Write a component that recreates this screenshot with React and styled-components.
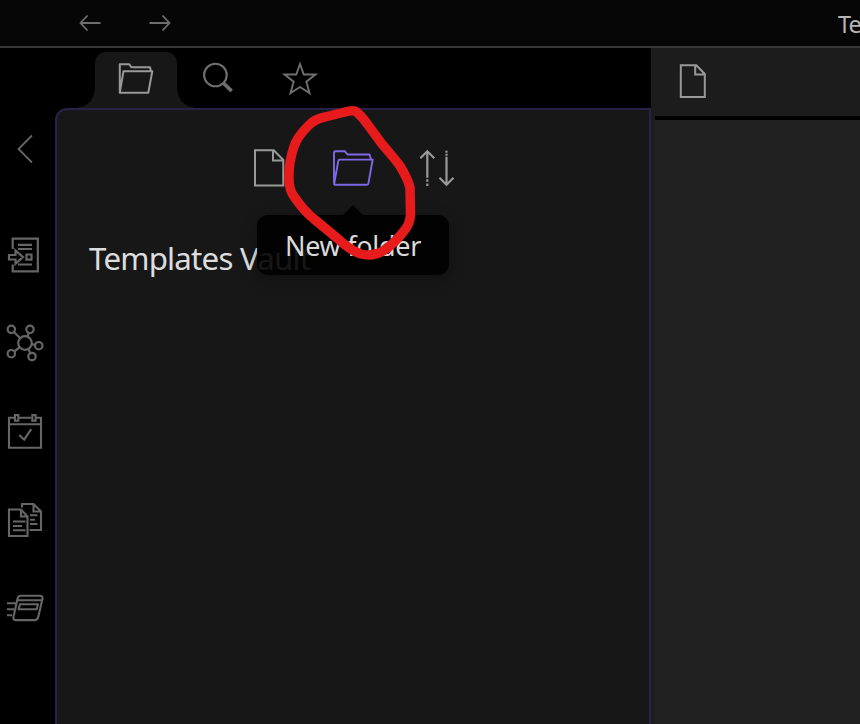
import React from 'react';
import styled, { createGlobalStyle } from 'styled-components';

const GlobalStyle = createGlobalStyle`
  * { box-sizing: border-box; }
  body { margin: 0; background: #000; overflow: hidden; font-family: "Noto Sans", "Open Sans", sans-serif; }
`;

const Window = styled.div`
  position: relative;
  width: 860px;
  height: 724px;
  overflow: hidden;
  display: flex;
  flex-direction: column;
  background: #000;
`;

const TitleBar = styled.header`
  height: 48px;
  flex: none;
  display: flex;
  align-items: center;
  background: #060606;
  border-bottom: 2px solid #363636;
`;

const NavArrows = styled.nav`
  display: flex;
  gap: 46px;
  padding-left: 78px;
  color: #6e6e6e;
`;

const Title = styled.div`
  margin-left: 666px;
  color: #b5b5b5;
  font-size: 23.5px;
  line-height: 32px;
  letter-spacing: -0.9px;
  white-space: nowrap;
  padding-top: 1px;
`;

const Workspace = styled.div`
  flex: 1;
  display: grid;
  grid-template-columns: 55px 596px 1fr;
  min-height: 0;
`;

const Rail = styled.aside`
  display: flex;
  flex-direction: column;
  align-items: center;
  padding: 82px 5px 0 0;
  color: #666;
`;

const RailButton = styled.div`
  height: ${(p) => p.$height || 88}px;
  display: flex;
  align-items: flex-start;
`;

const Sidebar = styled.section`
  display: flex;
  flex-direction: column;
`;

const Tabs = styled.div`
  height: 60px;
  flex: none;
  display: flex;
  padding: 4px 0 0 40px;
`;

const Tab = styled.div`
  position: relative;
  width: 82px;
  height: 56px;
  display: flex;
  justify-content: center;
  padding-top: 8px;
  color: ${(p) => (p.$active ? '#999' : '#707070')};
  background: ${(p) => (p.$active ? '#171717' : 'transparent')};
  border-radius: 10px 10px 0 0;
  &::before, &::after {
    content: ${(p) => (p.$active ? "''" : 'none')};
    position: absolute;
    bottom: 0;
    width: 19px;
    height: 19px;
  }
  &::before { right: 100%; background: radial-gradient(circle at 0 0, transparent 18.5px, #171717 19px); }
  &::after { left: 100%; background: radial-gradient(circle at 100% 0, transparent 18.5px, #171717 19px); }
`;

const Explorer = styled.div`
  flex: 1;
  background: #171717;
  border: 2px solid #28224a;
  border-bottom: 0;
  border-top-left-radius: 12px;
`;

const Actions = styled.div`
  display: flex;
  height: 82px;
  padding: 38px 0 0 195px;
  gap: 44px;
`;

const Action = styled.div`
  position: relative;
  flex: none;
  color: ${(p) => (p.$hot ? '#8069e8' : '#999')};
`;

const Tooltip = styled.div`
  position: absolute;
  z-index: 1;
  top: 67px;
  left: -73px;
  width: 192px;
  height: 60px;
  border-radius: 11px;
  background: rgba(0, 0, 0, 0.9);
  box-shadow: 0 4px 14px rgba(0, 0, 0, 0.3);
  color: #dadada;
  font-size: 27px;
  line-height: 62px;
  letter-spacing: -0.3px;
  text-align: center;
  white-space: nowrap;
  &::before {
    content: '';
    position: absolute;
    bottom: 100%;
    left: 86px;
    border: solid transparent;
    border-width: 0 10px 10px;
    border-bottom-color: rgba(0, 0, 0, 0.9);
  }
`;

const VaultName = styled.div`
  margin: 44px 0 0 32px;
  color: #dcddde;
  font-size: 31.3px;
  line-height: 44px;
  letter-spacing: -0.82px;
  white-space: nowrap;
`;

const Pane = styled.main`
  display: flex;
  flex-direction: column;
  background: #1c1c1c;
`;

const PaneHeader = styled.div`
  height: 68px;
  flex: none;
  padding: 15px 0 0 27px;
  color: #999;
`;

const PaneContent = styled.div`
  flex: 1;
  margin-left: 4px;
  background: #212121;
  border-top: 4px solid #000;
`;

const Annotation = styled.svg`
  position: absolute;
  left: 280px;
  top: 100px;
  z-index: 3;
  pointer-events: none;
`;

const Glyph = styled.svg`
  display: block;
  flex: none;
  fill: none;
  stroke: currentColor;
  stroke-width: ${(p) => p.$stroke || 2};
`;

const Icon = ({ w, h, stroke, children }) => (
  <Glyph width={w} height={h} viewBox={`0 0 ${w} ${h}`} $stroke={stroke}>{children}</Glyph>
);

const BackIcon = () => (
  <Icon w={24} h={18} stroke={1.8}><path d="M22.5 9H2.5M9.5 1.5 2.5 9l7 7.5" /></Icon>
);
const ForwardIcon = () => (
  <Icon w={24} h={18} stroke={1.8}><path d="M1.5 9h20M14.5 1.5l7 7.5-7 7.5" /></Icon>
);
const TabFolderIcon = () => (
  <Icon w={38} h={36} stroke={2}>
    <path strokeLinejoin="round" d="M2.800 32.700V4.200h9.500l2 3H33l1 4M2.800 32.700 6.500 11.200h28.800l-4 21.500Z" />
  </Icon>
);
const SearchIcon = () => (
  <Icon w={38} h={36} stroke={2.1}>
    <circle cx="16.400" cy="15" r="11.300" />
    <path d="m23.800 23.600 1.600-1.500 8 7.600-1.900 2.200-8.200-7.900Z" fill="currentColor" strokeWidth="1" />
  </Icon>
);
const StarIcon = () => (
  <Icon w={38} h={36} stroke={1.9}>
    <path d="M19 4 22.800 14.500H34.500L25.300 21.700 28.500 33 19 27 9.500 33 12.700 21.700 3.500 14.500H15.200Z" />
  </Icon>
);
const NewNoteIcon = () => (
  <Icon w={34} h={40} stroke={2}>
    <path d="M3 2.300h18.800l9.500 9.700v25.500H3ZM21 2.300v10.200h10.300" />
  </Icon>
);
const NewFolderIcon = () => (
  <Icon w={46} h={40} stroke={1.9}>
    <path strokeLinejoin="round" transform="translate(0 -1.700)" d="M4 37V6.500Q4 5 5.500 5h9.500l2.500 3.200H39.500l1.500 4.800M4 38.500 8.300 14.500Q8.500 13.300 10 13.300H42.700L38.400 37Q38.100 38.500 36.800 38.500H4" />
  </Icon>
);
const SortIcon = () => (
  <Icon w={38} h={40} stroke={2.2}>
    <path transform="translate(-1.700 -1.200)" d="M9 4.500V31M2 11.500 9 4.500l7 7M28.200 10v27M21.200 31l7 7 7-7M9 32.500v2.500M9 36.700v2.500M28.200 4v2M28.200 7v2" />
  </Icon>
);
const PageIcon = () => (
  <Icon w={30} h={36} stroke={2}>
    <path d="M2.800 2.300h15.500l8.500 8.700v23h-24ZM17.200 2.300v9.200h9.600" />
  </Icon>
);
const ChevronIcon = () => (
  <Icon w={18} h={36} stroke={1.8}><path d="M16 5.500 2.500 19l13.500 13.500" /></Icon>
);
const InsertIcon = () => (
  <Icon w={36} h={38} stroke={2.2}>
    <path d="M5.700 13V2.700H30.800v32.600H5.700V28.500M11 8.900h14M11 13h14M11 28.500h14M19.500 18.500h5v5.200h-5ZM2 19h6.500v-4.500l7.500 6.600-7.500 6.600V23.500H2Z" />
  </Icon>
);
const GraphIcon = () => (
  <Icon w={38} h={38} stroke={2.2}>
    <circle cx="19" cy="19" r="6.800" />
    <circle cx="5.300" cy="5.300" r="3.700" /><circle cx="24" cy="5.300" r="3.700" />
    <circle cx="32.800" cy="21.700" r="3.700" /><circle cx="26" cy="32.500" r="3.700" />
    <circle cx="5.300" cy="29.700" r="3.700" />
    <path d="m8 8 6.200 6.200M22.800 9l-1.500 3.600M25.700 20.200l3.500.7M22.300 25l2 4M13.600 23.400 8.200 27.500" />
  </Icon>
);
const CalendarIcon = () => (
  <Icon w={36} h={38} stroke={2.1}>
    <path d="M7 5.800H2v30h32v-30h-5M12 5.800h12M2 12.200h32M8 3h3.300v5.700H8ZM25.300 3h3.300v5.700h-3.300ZM12.200 23l5 4.700 7-10.500" />
  </Icon>
);
const TemplatesIcon = () => (
  <Icon w={36} h={38} stroke={2.1}>
    <path transform="translate(0 1)" d="M2 8.500h12l6.500 7V35H2ZM14 8.500v7h6.500M15 6.500V3h11.500l7.500 7.500V29H22.500M26.500 3v7.500H34M6 20.500h12.500M6 25h9M6 29.200h12.500M23 14.200h7.500M23 18.700h5M23 23h7.500" />
  </Icon>
);
const SlidesIcon = () => (
  <Icon w={38} h={34} stroke={2.1}>
    <path strokeLinejoin="round" transform="translate(0 .8)" d="M14.500 4H34q3 0 2.500 3L32.300 25Q31.500 28.300 29 28.300H10Q6.800 28.300 7.500 25L11.500 7Q12.300 4 14.500 4ZM11.500 8.500H36M14 12.500h18l-1.300 5H12.500ZM1 11.500h9M1 17.500h7M1 23.500h5" />
  </Icon>
);

export default function App() {
  return (
    <Window>
      <GlobalStyle />
      <TitleBar>
        <NavArrows><BackIcon /><ForwardIcon /></NavArrows>
        <Title>Templates Vault</Title>
      </TitleBar>
      <Workspace>
        <Rail>
          <RailButton $height={106}><ChevronIcon /></RailButton>
          <RailButton><InsertIcon /></RailButton>
          <RailButton><GraphIcon /></RailButton>
          <RailButton><CalendarIcon /></RailButton>
          <RailButton $height={91}><TemplatesIcon /></RailButton>
          <RailButton><SlidesIcon /></RailButton>
        </Rail>
        <Sidebar>
          <Tabs>
            <Tab $active><TabFolderIcon /></Tab>
            <Tab><SearchIcon /></Tab>
            <Tab><StarIcon /></Tab>
          </Tabs>
          <Explorer>
            <Actions>
              <Action><NewNoteIcon /></Action>
              <Action $hot>
                <NewFolderIcon />
                <Tooltip>New folder</Tooltip>
              </Action>
              <Action><SortIcon /></Action>
            </Actions>
            <VaultName>Templates Vault</VaultName>
          </Explorer>
        </Sidebar>
        <Pane>
          <PaneHeader><PageIcon /></PaneHeader>
          <PaneContent />
        </Pane>
      </Workspace>
      <Annotation width="140" height="165" viewBox="280 100 140 165" fill="none" stroke="#e71b1b" strokeWidth="9.500" strokeLinecap="round" strokeLinejoin="round">
        <path d="M355 111C351 110 348 111 345 112L325 117Q315 119 309 125Q296 138 293.500 148Q289 163 289 174Q288 190 295 198Q305 212 314 219L337 238Q351 251 361 254Q373 257 383 251Q394 244 404 231Q410 224 410.500 215L410 188Q408 179 400 166Q395 159 382 144L368 125Q361 115 355 111" />
      </Annotation>
    </Window>
  );
}
